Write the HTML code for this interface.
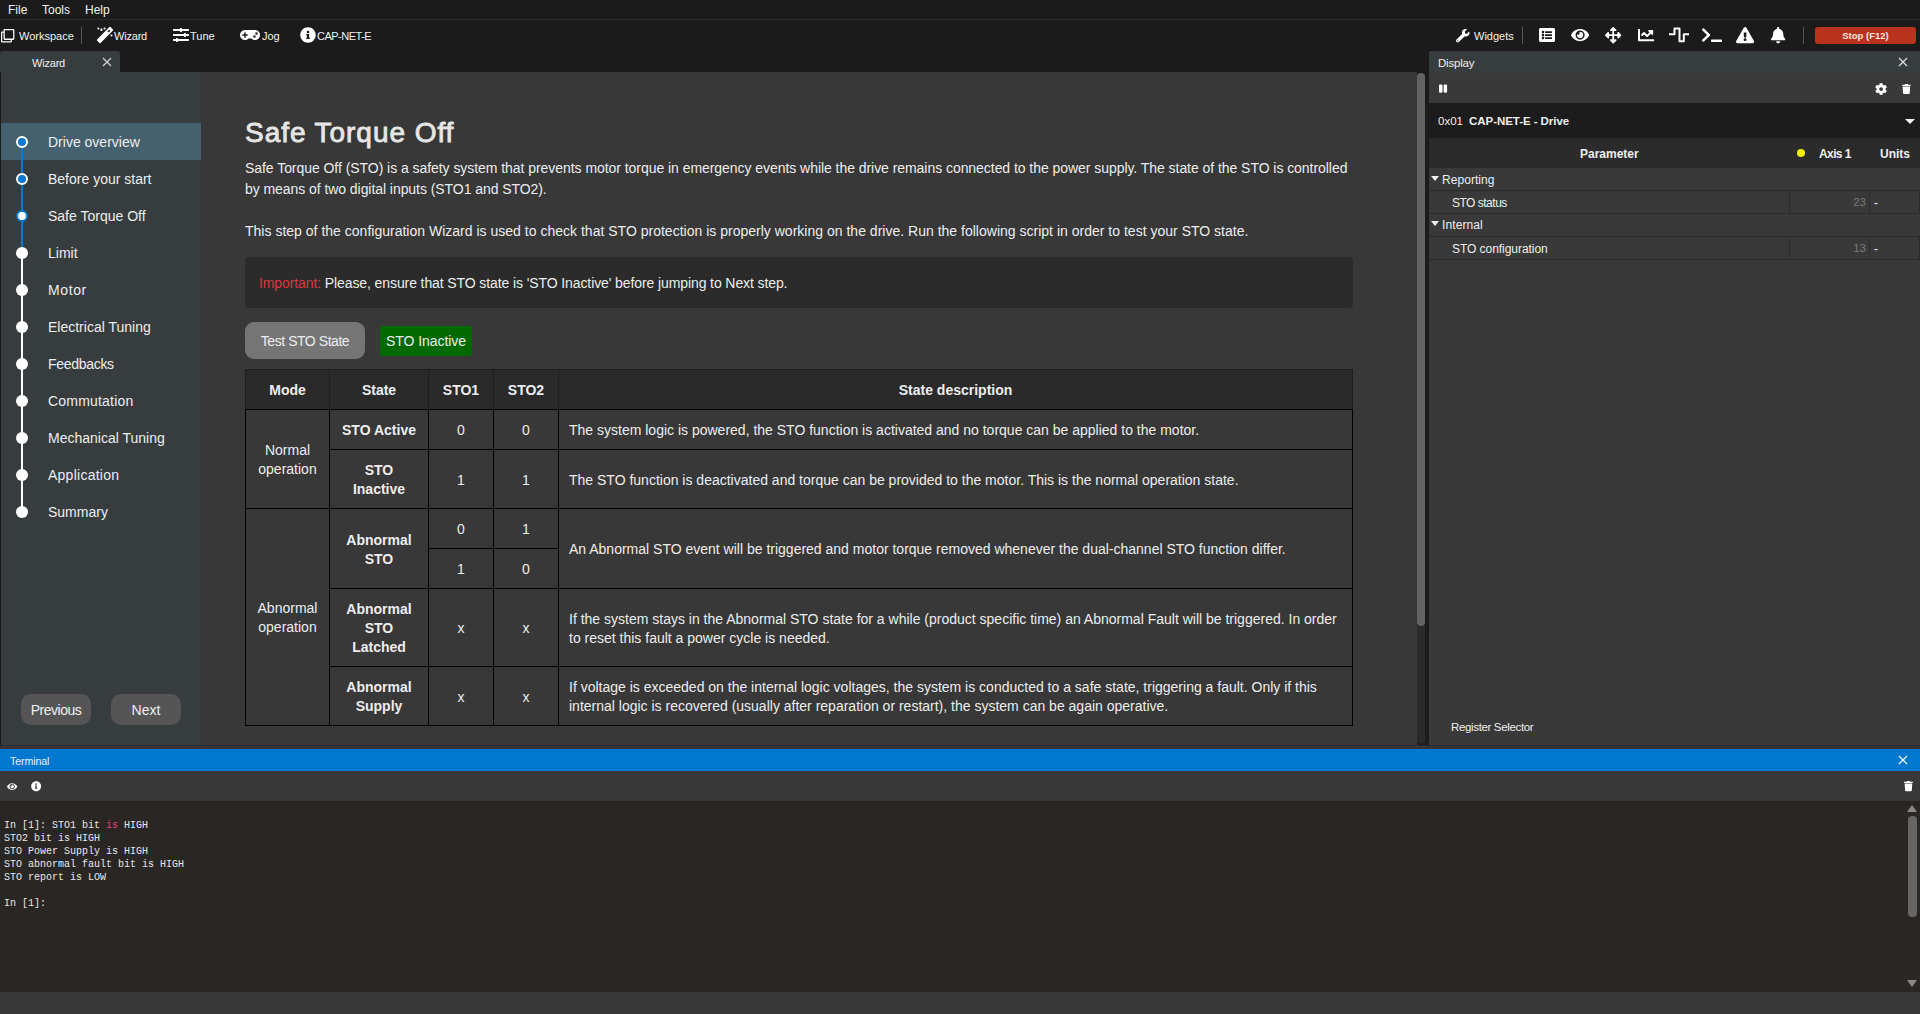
<!DOCTYPE html>
<html><head><meta charset="utf-8">
<style>
*{box-sizing:border-box;margin:0;padding:0}
html,body{width:1920px;height:1014px;overflow:hidden;background:#1b1b1b;font-family:"Liberation Sans",sans-serif;color:#f0f0f0}
.a{position:absolute}
.t{position:absolute;white-space:nowrap}
svg{position:absolute;overflow:visible}
/* menu */
#menu{left:0;top:0;width:1920px;height:20px;background:#1b1b1b;border-bottom:1px solid #2b2b2b}
#menu span{position:absolute;top:3px;font-size:12px;color:#f2f2f2}
/* toolbar */
.tb{font-size:11px;color:#f2f2f2;top:30px}
/* sidebar */
#side{left:1px;top:72px;width:200px;height:673px;background:#373d3f}
#main{left:201px;top:72px;width:1216px;height:673px;background:#383838}
.step{position:absolute;left:48px;font-size:14px;color:#ededed;white-space:nowrap}
.btn{position:absolute;background:#555;border-radius:10px;color:#f0f0f0;font-size:14px;display:flex;align-items:center;justify-content:center}
.p{font-size:14px;color:#ededed;letter-spacing:-0.06px}
/* table */
.ln{position:absolute;background:#000}
.c{position:absolute;display:flex;align-items:center;justify-content:center;text-align:center;font-size:14px;color:#ededed;line-height:19px;padding-top:2px}
.b{font-weight:bold}
.d{justify-content:flex-start;text-align:left;padding-left:10px}
/* right panel */
#rp{left:1429px;top:73px;width:491px;height:672px;background:#393939}
.rt{font-size:12px;color:#eee}
/* terminal */
.mono{font-family:"Liberation Mono",monospace;font-size:10px;color:#e8e8e8;line-height:13px}
</style></head><body>

<!-- menu bar -->
<div id="menu" class="a">
  <span style="left:8px">File</span>
  <span style="left:42px">Tools</span>
  <span style="left:85px">Help</span>
</div>

<!-- toolbar -->
<div class="t tb" style="left:19px">Workspace</div>
<div class="a" style="left:81px;top:27px;width:1px;height:17px;background:#555"></div>
<div class="t tb" style="left:114px;letter-spacing:-0.2px">Wizard</div>
<div class="t tb" style="left:190px">Tune</div>
<div class="t tb" style="left:262px">Jog</div>
<div class="t tb" style="left:317px;letter-spacing:-0.5px">CAP-NET-E</div>

<div class="t tb" style="left:1474px">Widgets</div>
<div class="a" style="left:1522px;top:27px;width:1px;height:17px;background:#555"></div>
<div class="a" style="left:1803px;top:27px;width:1px;height:17px;background:#555"></div>
<div class="a" style="left:1815px;top:27px;width:101px;height:17px;background:#b9321e;border-radius:3px"></div>
<div class="t" style="left:1815px;top:30px;width:101px;text-align:center;font-size:9.5px;font-weight:bold;color:#f5e6e0">Stop (F12)</div>

<!-- tab -->
<div class="a" style="left:0;top:51px;width:120px;height:21px;background:#373d3f;border-radius:2px 2px 0 0"></div>
<div class="t" style="left:32px;top:57px;font-size:11px;color:#eee;letter-spacing:-0.2px">Wizard</div>

<!-- sidebar -->
<div id="side" class="a"></div>
<div class="a" style="left:1px;top:123px;width:200px;height:37px;background:#45606e"></div>

<div class="a" style="left:21px;top:142px;width:2px;height:111px;background:#0a78d2"></div>
<div class="a" style="left:21px;top:253px;width:2px;height:259px;background:#fff"></div>
<div class="step" style="top:134px">Drive overview</div>
<div class="a" style="left:16px;top:136px;width:12px;height:12px;border-radius:50%;background:#0a78d2;border:2px solid #fff"></div>
<div class="step" style="top:171px">Before your start</div>
<div class="a" style="left:16px;top:173px;width:12px;height:12px;border-radius:50%;background:#0a78d2;border:2px solid #fff"></div>
<div class="step" style="top:208px">Safe Torque Off</div>
<div class="a" style="left:16px;top:210px;width:12px;height:12px;border-radius:50%;background:#fff;border:2px solid #0a78d2"></div>
<div class="step" style="top:245px">Limit</div>
<div class="a" style="left:16px;top:247px;width:12px;height:12px;border-radius:50%;background:#fff"></div>
<div class="step" style="top:282px;letter-spacing:0.6px">Motor</div>
<div class="a" style="left:16px;top:284px;width:12px;height:12px;border-radius:50%;background:#fff"></div>
<div class="step" style="top:319px">Electrical Tuning</div>
<div class="a" style="left:16px;top:321px;width:12px;height:12px;border-radius:50%;background:#fff"></div>
<div class="step" style="top:356px;letter-spacing:-0.3px">Feedbacks</div>
<div class="a" style="left:16px;top:358px;width:12px;height:12px;border-radius:50%;background:#fff"></div>
<div class="step" style="top:393px;letter-spacing:0.2px">Commutation</div>
<div class="a" style="left:16px;top:395px;width:12px;height:12px;border-radius:50%;background:#fff"></div>
<div class="step" style="top:430px">Mechanical Tuning</div>
<div class="a" style="left:16px;top:432px;width:12px;height:12px;border-radius:50%;background:#fff"></div>
<div class="step" style="top:467px;letter-spacing:0.25px">Application</div>
<div class="a" style="left:16px;top:469px;width:12px;height:12px;border-radius:50%;background:#fff"></div>
<div class="step" style="top:504px">Summary</div>
<div class="a" style="left:16px;top:506px;width:12px;height:12px;border-radius:50%;background:#fff"></div>
<div class="btn" style="left:21px;top:694px;width:70px;height:31px;letter-spacing:-0.5px;padding-top:1px">Previous</div>
<div class="btn" style="left:111px;top:694px;width:70px;height:31px;padding-top:1px">Next</div>

<!-- main -->
<div id="main" class="a"></div>

<div class="t" style="left:245px;top:117px;font-size:28px;color:#e6e6e6;-webkit-text-stroke:0.85px #e6e6e6;letter-spacing:0.95px">Safe Torque Off</div>
<div class="t p" style="left:245px;top:160px;letter-spacing:-0.05px">Safe Torque Off (STO) is a safety system that prevents motor torque in emergency events while the drive remains connected to the power supply. The state of the STO is controlled</div>
<div class="t p" style="left:245px;top:181px">by means of two digital inputs (STO1 and STO2).</div>
<div class="t p" style="left:245px;top:223px;letter-spacing:0.01px">This step of the configuration Wizard is used to check that STO protection is properly working on the drive. Run the following script in order to test your STO state.</div>
<div class="a" style="left:245px;top:257px;width:1108px;height:51px;background:#2b2b2b;border-radius:4px"></div>
<div class="t p" style="left:259px;top:275px;letter-spacing:-0.1px"><span style="color:#dc3545">Important:</span> Please, ensure that STO state is 'STO Inactive' before jumping to Next step.</div>
<div class="a" style="left:245px;top:322px;width:120px;height:37px;background:#757575;border-radius:9px"></div>
<div class="t p" style="left:245px;top:333px;width:120px;text-align:center;letter-spacing:-0.45px">Test STO State</div>
<div class="a" style="left:380px;top:326px;width:92px;height:30px;background:#006a00;border-radius:2px"></div>
<div class="t p" style="left:380px;top:333px;width:92px;text-align:center">STO Inactive</div>
<div class="a" style="left:245px;top:369px;width:1108px;height:41px;background:#2a2a2a"></div>
<div class="c b" style="left:246px;top:370px;width:83px;height:39px">Mode</div>
<div class="c b" style="left:330px;top:370px;width:98px;height:39px">State</div>
<div class="c b" style="left:429px;top:370px;width:64px;height:39px">STO1</div>
<div class="c b" style="left:494px;top:370px;width:64px;height:39px">STO2</div>
<div class="c b" style="left:559px;top:370px;width:793px;height:39px">State description</div>
<div class="ln" style="left:245px;top:369px;width:1px;height:41px;background:#1e1e1e"></div>
<div class="ln" style="left:329px;top:369px;width:1px;height:41px;background:#1e1e1e"></div>
<div class="ln" style="left:428px;top:369px;width:1px;height:41px;background:#1e1e1e"></div>
<div class="ln" style="left:493px;top:369px;width:1px;height:41px;background:#1e1e1e"></div>
<div class="ln" style="left:558px;top:369px;width:1px;height:41px;background:#1e1e1e"></div>
<div class="ln" style="left:1352px;top:369px;width:1px;height:41px;background:#1e1e1e"></div>
<div class="ln" style="left:245px;top:369px;width:1108px;height:1px;background:#1e1e1e"></div>
<div class="ln" style="left:245px;top:409px;width:1px;height:317px"></div>
<div class="ln" style="left:329px;top:409px;width:1px;height:317px"></div>
<div class="ln" style="left:558px;top:409px;width:1px;height:317px"></div>
<div class="ln" style="left:1352px;top:409px;width:1px;height:317px"></div>
<div class="ln" style="left:428px;top:409px;width:1px;height:317px"></div>
<div class="ln" style="left:493px;top:409px;width:1px;height:317px"></div>
<div class="ln" style="left:245px;top:409px;width:1108px;height:1px"></div>
<div class="ln" style="left:329px;top:449px;width:1024px;height:1px"></div>
<div class="ln" style="left:245px;top:508px;width:1108px;height:1px"></div>
<div class="ln" style="left:428px;top:548px;width:130px;height:1px"></div>
<div class="ln" style="left:329px;top:588px;width:1024px;height:1px"></div>
<div class="ln" style="left:329px;top:666px;width:1024px;height:1px"></div>
<div class="ln" style="left:245px;top:725px;width:1108px;height:1px"></div>
<div class="c " style="left:246px;top:410px;width:83px;height:98px">Normal<br>operation</div>
<div class="c " style="left:246px;top:509px;width:83px;height:216px">Abnormal<br>operation</div>
<div class="c b" style="left:330px;top:410px;width:98px;height:39px">STO Active</div>
<div class="c b" style="left:330px;top:450px;width:98px;height:58px">STO<br>Inactive</div>
<div class="c b" style="left:330px;top:509px;width:98px;height:79px">Abnormal<br>STO</div>
<div class="c b" style="left:330px;top:589px;width:98px;height:77px">Abnormal<br>STO<br>Latched</div>
<div class="c b" style="left:330px;top:667px;width:98px;height:58px">Abnormal<br>Supply</div>
<div class="c " style="left:429px;top:410px;width:64px;height:39px">0</div>
<div class="c " style="left:494px;top:410px;width:64px;height:39px">0</div>
<div class="c " style="left:429px;top:450px;width:64px;height:58px">1</div>
<div class="c " style="left:494px;top:450px;width:64px;height:58px">1</div>
<div class="c " style="left:429px;top:509px;width:64px;height:39px">0</div>
<div class="c " style="left:494px;top:509px;width:64px;height:39px">1</div>
<div class="c " style="left:429px;top:549px;width:64px;height:39px">1</div>
<div class="c " style="left:494px;top:549px;width:64px;height:39px">0</div>
<div class="c " style="left:429px;top:589px;width:64px;height:77px">x</div>
<div class="c " style="left:494px;top:589px;width:64px;height:77px">x</div>
<div class="c " style="left:429px;top:667px;width:64px;height:58px">x</div>
<div class="c " style="left:494px;top:667px;width:64px;height:58px">x</div>
<div class="c d" style="left:559px;top:410px;width:793px;height:39px">The system logic is powered, the STO function is activated and no torque can be applied to the motor.</div>
<div class="c d" style="left:559px;top:450px;width:793px;height:58px">The STO function is deactivated and torque can be provided to the motor. This is the normal operation state.</div>
<div class="c d" style="left:559px;top:509px;width:793px;height:79px">An Abnormal STO event will be triggered and motor torque removed whenever the dual-channel STO function differ.</div>
<div class="c d" style="left:559px;top:589px;width:793px;height:77px">If the system stays in the Abnormal STO state for a while (product specific time) an Abnormal Fault will be triggered. In order<br>to reset this fault a power cycle is needed.</div>
<div class="c d" style="left:559px;top:667px;width:793px;height:58px">If voltage is exceeded on the internal logic voltages, the system is conducted to a safe state, triggering a fault. Only if this<br>internal logic is recovered (usually after reparation or restart), the system can be again operative.</div>

<!-- scrollbar -->
<div class="a" style="left:1417px;top:73px;width:8px;height:671px;background:#2a2a2a;border-radius:4px"></div>
<div class="a" style="left:1417px;top:73px;width:8px;height:553px;background:#636363;border-radius:4px"></div>
<div class="a" style="left:1425px;top:73px;width:4px;height:673px;background:#1c1c1c"></div>

<!-- right panel -->
<div id="rp" class="a"></div>

<div class="a" style="left:0;top:745px;width:1920px;height:4px;background:#363636"></div>
<div class="a" style="left:0;top:745px;width:1920px;height:1px;background:#2b2b2b"></div>
<div class="a" style="left:0;top:748px;width:1920px;height:1px;background:#3a302c"></div>
<!-- terminal -->
<div class="a" style="left:0;top:749px;width:1920px;height:22px;background:#0078d0"></div>
<div class="t" style="left:10px;top:755px;font-size:10.6px;color:#eaf2fa;letter-spacing:-0.1px">Terminal</div>
<div class="a" style="left:0;top:771px;width:1920px;height:30px;background:#383838"></div>
<div class="a" style="left:0;top:801px;width:1920px;height:191px;background:#2a2624"></div>
<div class="a" style="left:0;top:992px;width:1920px;height:22px;background:#383838"></div>

<div class="a" style="left:1429px;top:51px;width:491px;height:22px;background:#373d3f;border-radius:2px 0 0 0"></div>
<div class="t rt" style="left:1438px;top:57px;font-size:11.5px;letter-spacing:-0.2px">Display</div>
<div class="a" style="left:1429px;top:73px;width:491px;height:30px;background:#393939"></div>
<div class="a" style="left:1429px;top:103px;width:491px;height:35px;background:#1c1c1c"></div>
<div class="t rt" style="left:1438px;top:115px;font-size:11.5px">0x01</div>
<div class="t rt" style="left:1469px;top:115px;font-size:11.5px;font-weight:bold;letter-spacing:-0.05px">CAP-NET-E - Drive</div>
<svg style="left:1905px;top:119px" width="10" height="6"><path d="M0 0H10L5 5Z" fill="#eee"/></svg>
<div class="a" style="left:1429px;top:138px;width:491px;height:30px;background:#2b2b2b"></div>
<div class="t rt b" style="left:1580px;top:147px;font-weight:bold;font-size:12px">Parameter</div>
<div class="a" style="left:1797px;top:149px;width:8px;height:8px;border-radius:50%;background:#f2f000"></div>
<div class="t rt" style="left:1819px;top:147px;font-weight:bold;font-size:12px;letter-spacing:-0.6px">Axis 1</div>
<div class="t rt" style="left:1880px;top:147px;font-weight:bold;font-size:12px;letter-spacing:0px">Units</div>
<div class="a" style="left:1429px;top:190px;width:491px;height:1px;background:#2c2c2c"></div>
<svg style="left:1431px;top:176px" width="9" height="6"><path d="M0 0H8L4 5Z" fill="#eee"/></svg>
<div class="t rt" style="left:1442px;top:173px;letter-spacing:0.05px">Reporting</div>
<div class="a" style="left:1429px;top:213px;width:491px;height:1px;background:#2c2c2c"></div>
<div class="t rt" style="left:1452px;top:196px;letter-spacing:-0.5px">STO status</div>
<div class="a" style="left:1789px;top:190px;width:1px;height:23px;background:#2c2c2c"></div>
<div class="a" style="left:1869px;top:190px;width:1px;height:23px;background:#2c2c2c"></div>
<div class="a" style="left:1919px;top:190px;width:1px;height:23px;background:#2c2c2c"></div>
<div class="t rt" style="left:1789px;top:196px;width:77px;text-align:right;color:#7a7a7a;font-size:11.5px">23</div>
<div class="t rt" style="left:1874px;top:196px">-</div>
<div class="a" style="left:1429px;top:236px;width:491px;height:1px;background:#2c2c2c"></div>
<svg style="left:1431px;top:221px" width="9" height="6"><path d="M0 0H8L4 5Z" fill="#eee"/></svg>
<div class="t rt" style="left:1442px;top:218px;letter-spacing:0.1px">Internal</div>
<div class="a" style="left:1429px;top:259px;width:491px;height:1px;background:#2c2c2c"></div>
<div class="t rt" style="left:1452px;top:242px;letter-spacing:-0.05px">STO configuration</div>
<div class="a" style="left:1789px;top:236px;width:1px;height:23px;background:#2c2c2c"></div>
<div class="a" style="left:1869px;top:236px;width:1px;height:23px;background:#2c2c2c"></div>
<div class="a" style="left:1919px;top:236px;width:1px;height:23px;background:#2c2c2c"></div>
<div class="t rt" style="left:1789px;top:242px;width:77px;text-align:right;color:#7a7a7a;font-size:11.5px">13</div>
<div class="t rt" style="left:1874px;top:242px">-</div>
<div class="t rt" style="left:1451px;top:721px;font-size:11.5px;letter-spacing:-0.35px">Register Selector</div>
<div class="t mono" style="left:4px;top:819px">In [1]: STO1 bit <span style="color:#e2457a">is</span> HIGH</div>
<div class="t mono" style="left:4px;top:832px">STO2 bit is HIGH</div>
<div class="t mono" style="left:4px;top:845px">STO Power Supply is HIGH</div>
<div class="t mono" style="left:4px;top:858px">STO abnormal fault bit is HIGH</div>
<div class="t mono" style="left:4px;top:871px">STO report is LOW</div>
<div class="t mono" style="left:4px;top:884px"></div>
<div class="t mono" style="left:4px;top:897px">In [1]:</div>
<svg style="left:1907px;top:805px" width="10" height="7"><path d="M0 7L5 0L10 7Z" fill="#8a8a8a"/></svg>
<div class="a" style="left:1908px;top:816px;width:9px;height:101px;background:#666;border-radius:4px"></div>
<svg style="left:1907px;top:980px" width="10" height="7"><path d="M0 0L5 7L10 0Z" fill="#8a8a8a"/></svg>
<!-- icons -->
<svg style="left:1px;top:28.6px" width="13.40" height="13.40" viewBox="0 0 512 512"><path fill="#fff" d="M464 0H144c-26.51 0-48 21.49-48 48v48H48c-26.51 0-48 21.490-48 48v320c0 26.51 21.49 48 48 48h320c26.51 0 48-21.49 48-48v-48h48c26.51 0 48-21.49 48-48V48c0-26.51-21.49-48-48-48zM362 464H54a6 6 0 0 1-6-6V150a6 6 0 0 1 6-6h42v224c0 26.51 21.49 48 48 48h224v42a6 6 0 0 1-6 6zm96-96H150a6 6 0 0 1-6-6V54a6 6 0 0 1 6-6h308a6 6 0 0 1 6 6v308a6 6 0 0 1-6 6z"/></svg>
<svg style="left:95px;top:26px" width="20" height="20" viewBox="0 0 20 20"><g transform="rotate(45 10 9)"><rect x="7.5" y="-0.5" width="5" height="19" rx="0.8" fill="#fff"/><rect x="9.2" y="2.2" width="1.6" height="2.6" fill="#1b1b1b"/></g><circle cx="3.4" cy="2.6" r="1" fill="#fff"/><circle cx="6.4" cy="3.7" r="1.2" fill="#fff"/><circle cx="9.5" cy="2.4" r="1" fill="#fff"/><circle cx="16.5" cy="9.6" r="1" fill="#fff"/></svg>
<svg style="left:173px;top:27px" width="16.00" height="16.00" viewBox="0 0 512 512"><path fill="#fff" d="M496 384H160v-16c0-8.8-7.2-16-16-16h-32c-8.8 0-16 7.2-16 16v16H16c-8.8 0-16 7.2-16 16v32c0 8.8 7.2 16 16 16h80v16c0 8.8 7.2 16 16 16h32c8.8 0 16-7.2 16-16v-16h336c8.8 0 16-7.2 16-16v-32c0-8.8-7.2-16-16-16zm0-160h-80v-16c0-8.8-7.2-16-16-16h-32c-8.8 0-16 7.2-16 16v16H16c-8.8 0-16 7.2-16 16v32c0 8.8 7.2 16 16 16h336v16c0 8.8 7.2 16 16 16h32c8.8 0 16-7.2 16-16v-16h80c8.8 0 16-7.2 16-16v-32c0-8.8-7.2-16-16-16zm0-160H288V48c0-8.8-7.2-16-16-16h-32c-8.8 0-16 7.2-16 16v16H16C7.2 64 0 71.2 0 80v32c0 8.8 7.2 16 16 16h208v16c0 8.8 7.2 16 16 16h32c8.8 0 16-7.2 16-16v-16h208c8.8 0 16-7.2 16-16V80c0-8.8-7.2-16-16-16z"/></svg>
<svg style="left:240px;top:26.8px" width="20.00" height="16.00" viewBox="0 0 640 512"><path fill="#fff" d="M480.07 96H160a160 160 0 1 0 114.24 272h91.52A160 160 0 1 0 480.07 96zM248 268a12 12 0 0 1-12 12h-52v52a12 12 0 0 1-12 12h-24a12 12 0 0 1-12-12v-52H84a12 12 0 0 1-12-12v-24a12 12 0 0 1 12-12h52v-52a12 12 0 0 1 12-12h24a12 12 0 0 1 12 12v52h52a12 12 0 0 1 12 12zm216 76a40 40 0 1 1 40-40 40 40 0 0 1-40 40zm64-96a40 40 0 1 1 40-40 40 40 0 0 1-40 40z"/></svg>
<svg style="left:299.8px;top:26.9px" width="16.00" height="16.00" viewBox="0 0 512 512"><path fill="#fff" d="M256 8C119.043 8 8 119.083 8 256c0 136.997 111.043 248 248 248s248-111.003 248-248C504 119.083 392.957 8 256 8zm0 110c23.196 0 42 18.804 42 42s-18.804 42-42 42-42-18.804-42-42 18.804-42 42-42zm56 254c0 6.627-5.373 12-12 12h-88c-6.627 0-12-5.373-12-12v-24c0-6.627 5.373-12 12-12h12v-64h-12c-6.627 0-12-5.373-12-12v-24c0-6.627 5.373-12 12-12h64c6.627 0 12 5.373 12 12v100h12c6.627 0 12 5.373 12 12v24z"/></svg>
<svg style="left:1455.8px;top:28.7px" width="13.50" height="13.50" viewBox="0 0 512 512"><path fill="#fff" d="M507.73 109.1c-2.24-9.03-13.54-12.09-20.12-5.51l-74.36 74.36-67.88-11.31-11.31-67.88 74.36-74.36c6.62-6.62 3.430-17.9-5.66-20.16-47.38-11.74-99.55.91-136.58 37.93-39.64 39.64-50.55 97.1-34.05 147.2L18.74 402.76c-24.99 24.99-24.99 65.51 0 90.5 24.99 24.99 65.51 24.99 90.5 0l213.21-213.21c50.12 16.71 107.47 5.68 147.37-34.22 37.07-37.07 49.7-89.32 37.91-136.73zM64 472c-13.25 0-24-10.75-24-24 0-13.26 10.75-24 24-24s24 10.74 24 24c0 13.25-10.75 24-24 24z"/></svg>
<svg style="left:1539px;top:26.7px" width="16.00" height="16.00" viewBox="0 0 512 512"><path fill="#fff" d="M464 480H48c-26.51 0-48-21.49-48-48V80c0-26.51 21.49-48 48-48h416c26.51 0 48 21.49 48 48v352c0 26.51-21.49 48-48 48zM128 120c-22.091 0-40 17.909-40 40s17.909 40 40 40 40-17.909 40-40-17.909-40-40-40zm0 96c-22.091 0-40 17.909-40 40s17.909 40 40 40 40-17.909 40-40-17.909-40-40-40zm0 96c-22.091 0-40 17.909-40 40s17.909 40 40 40 40-17.909 40-40-17.909-40-40-40zm288-136v-32c0-6.627-5.373-12-12-12H204c-6.627 0-12 5.373-12 12v32c0 6.627 5.373 12 12 12h200c6.627 0 12-5.373 12-12zm0 96v-32c0-6.627-5.373-12-12-12H204c-6.627 0-12 5.373-12 12v32c0 6.627 5.373 12 12 12h200c6.627 0 12-5.373 12-12zm0 96v-32c0-6.627-5.373-12-12-12H204c-6.627 0-12 5.373-12 12v32c0 6.627 5.373 12 12 12h200c6.627 0 12-5.373 12-12z"/></svg>
<svg style="left:1570.9px;top:26.8px" width="18.20" height="16.18" viewBox="0 0 576 512"><path fill="#fff" d="M572.52 241.4C518.29 135.59 410.93 64 288 64S57.68 135.64 3.48 241.41a32.35 32.35 0 0 0 0 29.19C57.71 376.41 165.07 448 288 448s230.32-71.64 284.52-177.41a32.35 32.35 0 0 0 0-29.19zM288 400a144 144 0 1 1 144-144 143.93 143.93 0 0 1-144 144zm0-240a95.31 95.31 0 0 0-25.31 3.79 47.85 47.85 0 0 1-66.9 66.9A95.78 95.78 0 1 0 288 160z"/></svg>
<svg style="left:1604.7px;top:26.7px" width="16.40" height="16.40" viewBox="0 0 512 512"><path fill="#fff" d="M352.201 425.775l-79.196 79.196c-9.373 9.373-24.568 9.373-33.941 0l-79.196-79.196c-15.119-15.119-4.411-40.971 16.971-40.97h51.162L228 284H127.196v51.162c0 21.382-25.851 32.090-40.971 16.971L7.029 272.937c-9.373-9.373-9.373-24.569 0-33.941L86.225 159.8c15.119-15.119 40.971-4.411 40.971 16.971V228H228V127.196h-51.23c-21.382 0-32.09-25.851-16.971-40.971l79.196-79.196c9.373-9.373 24.568-9.373 33.941 0l79.196 79.196c15.119 15.119 4.411 40.971-16.971 40.971h-51.162V228h100.804v-51.162c0-21.382 25.851-32.09 40.97-16.971l79.196 79.196c9.373 9.373 9.373 24.569 0 33.941L425.773 352.2c-15.119 15.119-40.971 4.411-40.97-16.971V284H284v100.804h51.23c21.382 0 32.09 25.851 16.971 40.971z"/></svg>
<svg style="left:1638px;top:26.8px" width="16.20" height="16.20" viewBox="0 0 512 512"><path fill="#fff" d="M496 384H64V80c0-8.84-7.16-16-16-16H16C7.16 64 0 71.16 0 80v336c0 17.67 14.33 32 32 32h464c8.84 0 16-7.16 16-16v-32c0-8.84-7.16-16-16-16zM464 96H345.94c-21.38 0-32.09 25.850-16.97 40.970l32.4 32.4L288 242.75l-73.37-73.37c-12.5-12.5-32.76-12.5-45.25 0l-68.69 68.69c-6.25 6.25-6.25 16.38 0 22.63l22.62 22.62c6.25 6.25 16.38 6.25 22.63 0L192 237.25l73.37 73.37c12.5 12.5 32.76 12.5 45.25 0l96-96 32.4 32.4c15.12 15.12 40.97 4.41 40.97-16.97V112c.01-8.84-7.15-16-15.99-16z"/></svg>
<svg style="left:1668px;top:27px" width="22" height="16" viewBox="0 0 22 16"><path d="M1 7.3H6.5V1.6H11.5V14.2H15.8V7.3H21" stroke="#fff" stroke-width="2" fill="none" stroke-linejoin="round"/></svg>
<svg style="left:1701.9px;top:26.85px" width="20.00" height="16.00" viewBox="0 0 640 512"><path fill="#fff" d="M257.981 272.971L63.638 467.314c-9.373 9.373-24.569 9.373-33.941 0L7.029 444.647c-9.357-9.357-9.375-24.522-.04-33.901L161.011 256 6.99 101.255c-9.335-9.379-9.317-24.544.04-33.901l22.667-22.667c9.373-9.373 24.569-9.373 33.941 0L257.981 239.03c9.373 9.372 9.373 24.568 0 33.941zM640 456v-32c0-13.255-10.745-24-24-24H312c-13.255 0-24 10.745-24 24v32c0 13.255 10.745 24 24 24h304c13.255 0 24-10.745 24-24z"/></svg>
<svg style="left:1735.9px;top:26.8px" width="18.20" height="16.18" viewBox="0 0 576 512"><path fill="#fff" d="M569.517 440.013C587.975 472.007 564.806 512 527.94 512H48.054c-36.937 0-59.999-40.055-41.577-71.987L246.423 23.985c18.467-32.009 64.72-31.951 83.154 0l239.94 416.028zM288 354c-25.405 0-46 20.595-46 46s20.595 46 46 46 46-20.595 46-46-20.595-46-46-46zm-43.673-165.346l7.418 136c.347 6.364 5.609 11.346 11.982 11.346h48.546c6.373 0 11.635-4.982 11.982-11.346l7.418-136c.375-6.874-5.098-12.654-11.982-12.654h-63.383c-6.884 0-12.356 5.78-11.981 12.654z"/></svg>
<svg style="left:1770.8px;top:26.9px" width="14.30" height="16.34" viewBox="0 0 448 512"><path fill="#fff" d="M224 512c35.32 0 63.97-28.65 63.97-64H160.03c0 35.35 28.65 64 63.97 64zm215.39-149.71c-19.32-20.76-55.47-51.99-55.47-154.29 0-77.7-54.48-139.9-127.94-155.16V32c0-17.67-14.32-32-31.98-32s-31.98 14.33-31.98 32v20.84C118.56 68.1 64.08 130.3 64.08 208c0 102.3-36.15 133.53-55.470 154.29-6 6.45-8.66 14.16-8.61 21.71.11 16.4 12.98 32 32.1 32h383.8c19.12 0 32-15.6 32.1-32 .05-7.55-2.61-15.27-8.61-21.71z"/></svg>
<svg style="left:1898px;top:57px" width="10" height="10" viewBox="0 0 10 10"><path d="M1 1L9 9M9 1L1 9" stroke="#dcdcdc" stroke-width="1.3"/></svg>
<svg style="left:102px;top:57px" width="10" height="10" viewBox="0 0 10 10"><path d="M1 1L9 9M9 1L1 9" stroke="#cfcfcf" stroke-width="1.3"/></svg>
<svg style="left:1438.9px;top:84.3px" width="8.10" height="9.26" viewBox="0 0 448 512"><path fill="#fff" d="M144 479H48c-26.5 0-48-21.5-48-48V79c0-26.5 21.5-48 48-48h96c26.5 0 48 21.5 48 48v352c0 26.5-21.5 48-48 48zm304-48V79c0-26.5-21.5-48-48-48h-96c-26.5 0-48 21.5-48 48v352c0 26.5 21.5 48 48 48h96c26.5 0 48-21.5 48-48z"/></svg>
<svg style="left:1874.9px;top:82.9px" width="12.20" height="12.20" viewBox="0 0 512 512"><path fill="#fff" d="M487.4 315.7l-42.6-24.6c4.3-23.2 4.3-47 0-70.2l42.6-24.6c4.9-2.8 7.1-8.6 5.5-14-11.1-35.6-30-67.8-54.7-94.6-3.8-4.1-10-5.1-14.8-2.3L380.8 110c-17.9-15.4-38.5-27.3-60.8-35.1V25.8c0-5.6-3.9-10.5-9.4-11.7-36.7-8.2-74.3-7.8-109.2 0-5.5 1.2-9.4 6.1-9.4 11.7V75c-22.2 7.9-42.8 19.8-60.8 35.1L88.7 85.5c-4.9-2.8-11-1.9-14.8 2.3-24.7 26.7-43.6 58.9-54.7 94.6-1.7 5.4.6 11.2 5.5 14L67.3 221c-4.3 23.2-4.3 47 0 70.2l-42.6 24.6c-4.9 2.8-7.1 8.6-5.5 14 11.1 35.6 30 67.8 54.7 94.6 3.8 4.1 10 5.1 14.8 2.3l42.6-24.6c17.9 15.4 38.5 27.3 60.8 35.1v49.2c0 5.6 3.9 10.5 9.4 11.7 36.7 8.2 74.3 7.8 109.2 0 5.5-1.2 9.4-6.1 9.4-11.7v-49.2c22.2-7.9 42.8-19.8 60.8-35.1l42.6 24.6c4.9 2.8 11 1.9 14.8-2.3 24.7-26.7 43.6-58.9 54.7-94.6 1.5-5.5-.7-11.3-5.6-14.1zM256 336c-44.1 0-80-35.9-80-80s35.9-80 80-80 80 35.9 80 80-35.9 80-80 80z"/></svg>
<svg style="left:1901.6px;top:84px" width="8.75" height="10.00" viewBox="0 0 448 512"><path fill="#fff" d="M432 32H312l-9.4-18.7A24 24 0 0 0 281.1 0H166.8a23.72 23.72 0 0 0-21.4 13.3L136 32H16A16 16 0 0 0 0 48v32a16 16 0 0 0 16 16h416a16 16 0 0 0 16-16V48a16 16 0 0 0-16-16zM53.2 467a48 48 0 0 0 47.9 45h245.8a48 48 0 0 0 47.9-45L416 128H32z"/></svg>
<svg style="left:1898px;top:755px" width="10" height="10" viewBox="0 0 10 10"><path d="M1 1L9 9M9 1L1 9" stroke="#eaf2fa" stroke-width="1.3"/></svg>
<svg style="left:1904px;top:780.8px" width="8.90" height="10.17" viewBox="0 0 448 512"><path fill="#fff" d="M432 32H312l-9.4-18.7A24 24 0 0 0 281.1 0H166.8a23.72 23.72 0 0 0-21.4 13.3L136 32H16A16 16 0 0 0 0 48v32a16 16 0 0 0 16 16h416a16 16 0 0 0 16-16V48a16 16 0 0 0-16-16zM53.2 467a48 48 0 0 0 47.9 45h245.8a48 48 0 0 0 47.9-45L416 128H32z"/></svg>
<svg style="left:6.9px;top:781.7px" width="10.30" height="9.16" viewBox="0 0 576 512"><path fill="#fff" d="M572.52 241.4C518.29 135.59 410.93 64 288 64S57.68 135.64 3.48 241.41a32.35 32.35 0 0 0 0 29.19C57.71 376.41 165.07 448 288 448s230.32-71.64 284.52-177.41a32.35 32.35 0 0 0 0-29.19zM288 400a144 144 0 1 1 144-144 143.93 143.93 0 0 1-144 144zm0-240a95.31 95.31 0 0 0-25.31 3.79 47.85 47.85 0 0 1-66.9 66.9A95.78 95.78 0 1 0 288 160z"/></svg>
<svg style="left:30.75px;top:780.75px" width="10.30" height="10.30" viewBox="0 0 512 512"><path fill="#fff" d="M256 8C119.043 8 8 119.083 8 256c0 136.997 111.043 248 248 248s248-111.003 248-248C504 119.083 392.957 8 256 8zm0 110c23.196 0 42 18.804 42 42s-18.804 42-42 42-42-18.804-42-42 18.804-42 42-42zm56 254c0 6.627-5.373 12-12 12h-88c-6.627 0-12-5.373-12-12v-24c0-6.627 5.373-12 12-12h12v-64h-12c-6.627 0-12-5.373-12-12v-24c0-6.627 5.373-12 12-12h64c6.627 0 12 5.373 12 12v100h12c6.627 0 12 5.373 12 12v24z"/></svg>
</body></html>
